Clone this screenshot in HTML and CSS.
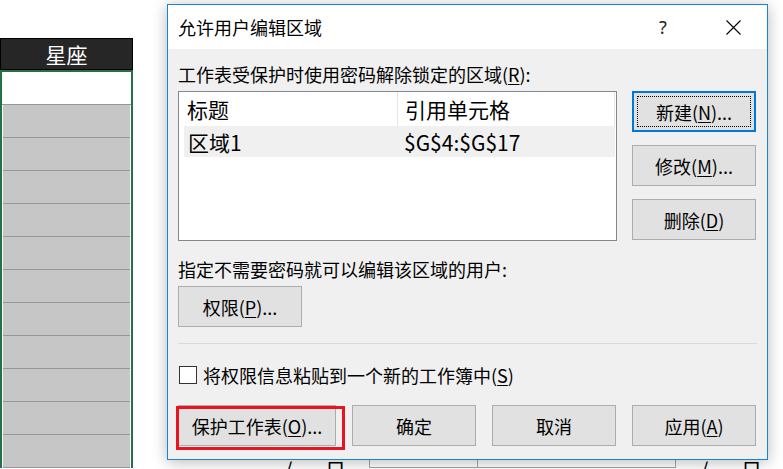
FILE: index.html
```html
<!DOCTYPE html>
<html lang="zh-CN">
<head>
<meta charset="utf-8">
<title>允许用户编辑区域</title>
<link rel="stylesheet" href="styles.css">
</head>
<body>
<div class="sheet">
  <div class="col-head">星座</div>
  <div class="sel">
    <div class="cell first"></div>
    <div class="cell"></div>
    <div class="cell"></div>
    <div class="cell"></div>
    <div class="cell"></div>
    <div class="cell"></div>
    <div class="cell"></div>
    <div class="cell"></div>
    <div class="cell"></div>
    <div class="cell"></div>
    <div class="cell"></div>
    <div class="cell"></div>
  </div>
</div>

<div class="under">
  <span class="frag slash">/</span>
  <span class="frag day">日</span>
  <div class="ubox"><div class="ucell u1"></div><div class="ucell u2"></div></div>
  <span class="frag slash gap">/</span>
  <span class="frag day">日</span>
</div>

<div class="dialog">
  <div class="titlebar">
    <span class="title">允许用户编辑区域</span>
    <span class="help">?</span>
    <span class="close"><svg width="15" height="15" viewBox="0 0 15 15"><path d="M0.5 0.5 L14.5 14.5 M14.5 0.5 L0.5 14.5" stroke="#000" stroke-width="1.1" fill="none"/></svg></span>
  </div>
  <div class="body">
    <div class="label l1">工作表受保护时使用密码解除锁定的区域(<u>R</u>):</div>
    <div class="mid">
      <div class="list">
        <div class="lhead">
          <div class="hc hc1">标题</div>
          <div class="hc hc2">引用单元格</div>
        </div>
        <div class="lrow">
          <div class="rc rc1">区域1</div>
          <div class="rc rc2">$G$4:$G$17</div>
        </div>
      </div>
      <div class="side">
        <div class="btn focus"><span class="focusbox">新建(<u>N</u>)...</span></div>
        <div class="btn">修改(<u>M</u>)...</div>
        <div class="btn">删除(<u>D</u>)</div>
      </div>
    </div>
    <div class="label l2">指定不需要密码就可以编辑该区域的用户:</div>
    <div class="btn perm">权限(<u>P</u>)...</div>
    <div class="sep"></div>
    <div class="check"><span class="box"></span><span class="clabel">将权限信息粘贴到一个新的工作簿中(<u>S</u>)</span></div>
    <div class="actions">
      <div class="hl"><div class="btn wide">保护工作表(<u>O</u>)...</div></div>
      <div class="btn">确定</div>
      <div class="btn">取消</div>
      <div class="btn">应用(<u>A</u>)</div>
    </div>
  </div>
</div>
</body>
</html>
```

FILE: styles.css
```css
html, body {
  margin: 0;
  padding: 0;
}
body {
  width: 783px;
  height: 469px;
  overflow: hidden;
  background: #fff;
  position: relative;
  font-family: "Noto Sans CJK SC", "Noto Sans", sans-serif;
  color: #000;
}

/* spreadsheet column */
.sheet {
  width: 133px;
  padding-top: 38px;
  display: flex;
  flex-direction: column;
}
.col-head {
  height: 32px;
  box-sizing: border-box;
  background: #262626;
  border: 1px solid #000;
  color: #fff;
  font-size: 21px;
  display: flex;
  align-items: center;
  justify-content: center;
}
.sel {
  border: 2px solid #217346;
  border-bottom: none;
  background: #fff;
  padding: 0 1px 0 1px;
}
.cell {
  height: 32px;
  background: #c6c6c6;
  border-bottom: 1px solid #969696;
}
.cell.first {
  background: #fff;
  margin: 0 -1px;
}

/* sheet content partly hidden under the dialog */
.under {
  position: absolute;
  left: 284px;
  top: 440px;
  display: flex;
  align-items: flex-start;
  font-size: 21px;
  line-height: 24px;
}
.frag {
  margin-top: 17px;
  white-space: nowrap;
}
.slash { width: 41px; }
.day { width: 44px; }
.gap { margin-left: 24px; }
.ubox {
  display: flex;
  height: 28px;
  box-sizing: border-box;
  border: 1px solid #a6a6a6;
}
.ucell { height: 100%; }
.u1 { width: 107px; border-right: 1px solid #a6a6a6; }
.u2 { width: 197px; }

/* dialog window */
.dialog {
  position: absolute;
  left: 167px;
  top: 4px;
  width: 601px;
  height: 456px;
  box-sizing: border-box;
  border: 1px solid #1883d7;
  background: #f0f0f0;
  box-shadow: 0 2px 14px rgba(0, 0, 0, 0.28);
  display: flex;
  flex-direction: column;
  font-size: 18px;
}
.titlebar {
  height: 44px;
  flex: none;
  background: #fff;
  display: flex;
  align-items: center;
  padding: 0 11px 0 10px;
  line-height: 24px;
}
.title { flex: 1; }
.help {
  width: 46px;
  text-align: center;
  font-family: "Noto Sans", sans-serif;
  color: #222;
}
.close {
  width: 46px;
  margin-left: 24px;
  display: flex;
  justify-content: center;
}
.close svg { display: block; }

.body {
  flex: 1;
  padding: 0 10px;
  display: flex;
  flex-direction: column;
  line-height: 24px;
}
u { text-decoration-thickness: 1px; text-underline-offset: 2px; }

.label { height: 24px; white-space: nowrap; }
.l1 { margin-top: 13px; }
.l2 { margin-top: 16px; }

.mid {
  margin-top: 5px;
  display: flex;
  gap: 15px;
  height: 150px;
}
.list {
  width: 439px;
  height: 150px;
  box-sizing: border-box;
  border: 1px solid #828790;
  background: #fff;
  font-size: 21px;
}
.lhead {
  display: flex;
  height: 34px;
  width: 436px;
}
.hc {
  box-sizing: border-box;
  display: flex;
  align-items: center;
  border-right: 1px solid #e5e5e5;
}
.hc1 { width: 219px; padding-left: 8px; }
.hc2 { width: 217px; padding-left: 7px; }
.lrow {
  display: flex;
  height: 31px;
  width: 431px;
  margin-left: 5px;
  background: #f0f0f0;
}
.rc {
  display: flex;
  align-items: center;
  box-sizing: border-box;
}
.rc1 { width: 216px; padding-left: 4px; }
.rc2 { padding-left: 4px; }

.side {
  display: flex;
  flex-direction: column;
  gap: 13px;
}
.btn {
  box-sizing: border-box;
  height: 41px;
  width: 124px;
  background: #e1e1e1;
  border: 1px solid #adadad;
  display: flex;
  align-items: center;
  justify-content: center;
  white-space: nowrap;
  flex: none;
}
.btn.focus {
  border: 2px solid #0078d7;
  padding: 3px;
  align-items: stretch;
}
.focusbox {
  flex: 1;
  border: 1px dotted #000;
  display: flex;
  align-items: center;
  justify-content: center;
}
.perm { margin-top: 5px; }
.sep {
  margin-top: 16px;
  height: 1px;
  background: #dadada;
}
.check {
  margin-top: 19px;
  height: 24px;
  display: flex;
  align-items: center;
}
.box {
  width: 18px;
  height: 18px;
  box-sizing: border-box;
  border: 1px solid #333;
  background: #fff;
  margin-left: 1px;
}
.clabel { margin-left: 6px; white-space: nowrap; }

.actions {
  margin-top: 18px;
  display: flex;
  gap: 16px;
}
.hl { position: relative; }
.btn.wide { width: 158px; }
.hl::after {
  content: "";
  position: absolute;
  left: -2px;
  top: 1px;
  right: -9px;
  bottom: -4px;
  border: 3px solid #e8141f;
}
```
